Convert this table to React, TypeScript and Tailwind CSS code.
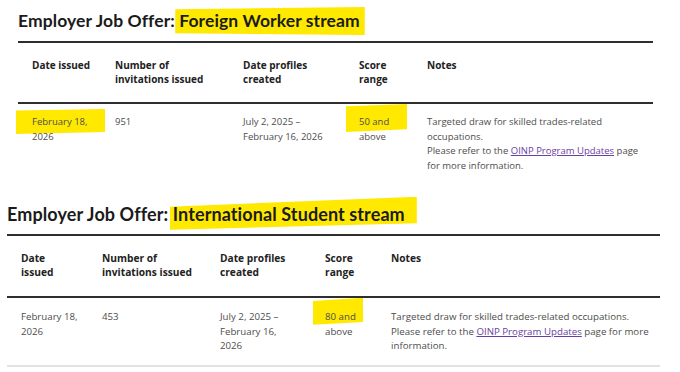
import React from "react";

export default function App() {
  return (
    <div className="w-[680px] h-[372px] bg-white overflow-hidden relative font-['Open_Sans',sans-serif]">
      {/* Section 1 */}
      <div className="ml-[18px] w-[635px] pt-[9px]">
        <h2 className="font-['Lato',sans-serif] font-bold text-[17.5px] leading-[24px] text-[#1b1b1b] tracking-[0.1px]">
          Employer Job Offer:{" "}
          <span className="relative">
            <span className="absolute left-[-4px] right-[-5px] top-[-3px] bottom-[-4px] bg-[#ffe900] [clip-path:polygon(0_8%,100%_0,100%_100%,0_94%)]" />
            <span className="relative">Foreign Worker stream</span>
          </span>
        </h2>
        <div className="mt-[8px] border-t-2 border-[#2e2e2e]">
          <div className="grid grid-cols-[83px_128px_116px_68px_240px] text-[10px] leading-[14px] font-bold text-[#222] pt-[15px] pb-[16px] border-b-2 border-[#2e2e2e] h-[61px]">
            <div className="pl-[14px]">Date issued</div>
            <div className="pl-[14px]">Number of<br />invitations issued</div>
            <div className="pl-[14px]">Date profiles<br />created</div>
            <div className="pl-[14px]">Score<br />range</div>
            <div className="pl-[14px]">Notes</div>
          </div>
          <div className="grid grid-cols-[83px_128px_116px_68px_240px] text-[9.5px] leading-[14.7px] text-[#4d4d4d] pt-[11px]">
            <div className="pl-[14px] relative">
              <span className="absolute left-[-2px] top-[-6px] w-[89px] h-[25px] bg-[#ffe900] [clip-path:polygon(0_6%,100%_0,100%_92%,0_100%)]" />
              <span className="relative">February 18,<br />2026</span>
            </div>
            <div className="pl-[14px]">951</div>
            <div className="pl-[14px] whitespace-nowrap">July 2, 2025 –<br />February 16, 2026</div>
            <div className="pl-[14px] relative">
              <span className="absolute left-[1px] top-[-11px] w-[61px] h-[28px] bg-[#ffe900] [clip-path:polygon(0_8%,100%_0,100%_90%,0_100%)]" />
              <span className="relative">50 and<br />above</span>
            </div>
            <div className="pl-[14px] whitespace-nowrap">
              Targeted draw for skilled trades-related<br />
              occupations.<br />
              Please refer to the{" "}
              <a className="text-[#6b3ea3] underline">OINP Program Updates</a> page<br />
              for more information.
            </div>
          </div>
        </div>
      </div>

      {/* Section 2 */}
      <div className="ml-[7px] w-[653px] mt-[28px]">
        <h2 className="font-['Lato',sans-serif] font-bold text-[18px] leading-[24px] text-[#1b1b1b] tracking-[0.1px]">
          Employer Job Offer:{" "}
          <span className="relative">
            <span className="absolute left-[-3px] right-[-12px] top-[-6px] bottom-[-5px] bg-[#ffe900] [clip-path:polygon(0_30%,100%_0,100%_80%,0_100%)]" />
            <span className="relative">International Student stream</span>
          </span>
        </h2>
        <div className="mt-[8px] border-t-2 border-[#2e2e2e]">
          <div className="grid grid-cols-[81px_118px_105px_66px_283px] text-[10.2px] leading-[14px] font-bold text-[#222] pt-[15px] pb-[16px] border-b-2 border-[#2e2e2e] h-[62px]">
            <div className="pl-[14px]">Date<br />issued</div>
            <div className="pl-[14px]">Number of<br />invitations issued</div>
            <div className="pl-[14px]">Date profiles<br />created</div>
            <div className="pl-[14px]">Score<br />range</div>
            <div className="pl-[14px]">Notes</div>
          </div>
          <div className="grid grid-cols-[81px_118px_105px_66px_283px] text-[9.7px] leading-[14.7px] text-[#4d4d4d] pt-[12px] pb-[11px] border-b-2 border-[#e2e2e2]">
            <div className="pl-[14px]">February 18,<br />2026</div>
            <div className="pl-[14px]">453</div>
            <div className="pl-[14px] whitespace-nowrap">July 2, 2025 –<br />February 16,<br />2026</div>
            <div className="pl-[14px] relative">
              <span className="absolute left-[2px] top-[-12px] w-[50px] h-[27px] bg-[#ffe900] [clip-path:polygon(0_12%,100%_0,100%_90%,0_100%)]" />
              <span className="relative">80 and<br />above</span>
            </div>
            <div className="pl-[14px] whitespace-nowrap">
              Targeted draw for skilled trades-related occupations.<br />
              Please refer to the{" "}
              <a className="text-[#6b3ea3] underline">OINP Program Updates</a> page for more<br />
              information.
            </div>
          </div>
        </div>
      </div>
    </div>
  );
}
